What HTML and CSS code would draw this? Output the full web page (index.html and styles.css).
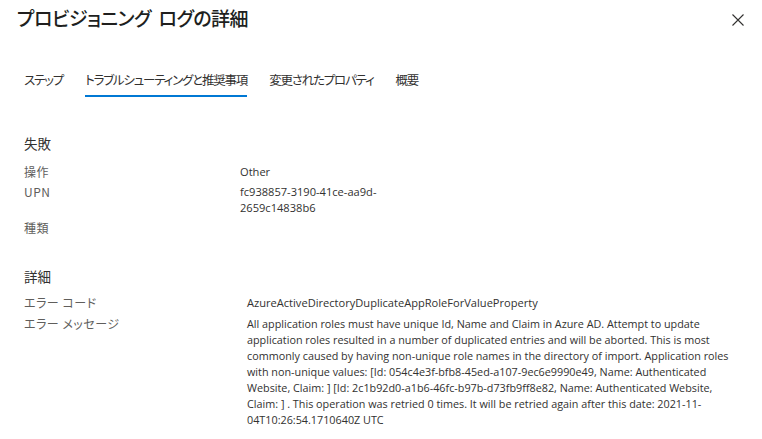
FILE: index.html
```html
<!DOCTYPE html>
<html lang="ja">
<head>
<meta charset="utf-8">
<title>プロビジョニング ログの詳細</title>
<link rel="stylesheet" href="styles.css">
</head>
<body>
<div class="panel">
  <header class="header">
    <h1 class="title">プロビジョニング ログの詳細</h1>
    <button class="close" aria-label="閉じる">
      <svg width="12" height="12" viewBox="0 0 12 12"><path d="M0.5 0.5 L11.5 11.5 M11.5 0.5 L0.5 11.5" stroke="#323130" stroke-width="1.1" fill="none"/></svg>
    </button>
  </header>
  <nav class="tabs">
    <span class="tab">ステップ</span>
    <span class="tab active">トラブルシューティングと推奨事項</span>
    <span class="tab">変更されたプロパティ</span>
    <span class="tab">概要</span>
  </nav>
  <section class="section first">
    <h2 class="section-title">失敗</h2>
    <div class="grid grid-a">
      <div class="label">操作</div><div class="value">Other</div>
      <div class="label">UPN</div><div class="value upn">fc938857-3190-41ce-aa9d-2659c14838b6</div>
      <div class="label">種類</div><div class="value"></div>
    </div>
  </section>
  <section class="section second">
    <h2 class="section-title">詳細</h2>
    <div class="grid grid-b">
      <div class="label">エラー コード</div><div class="value">AzureActiveDirectoryDuplicateAppRoleForValueProperty</div>
      <div class="label">エラー メッセージ</div><div class="value msg">All application roles must have unique Id, Name and Claim in Azure AD. Attempt to update<br>application roles resulted in a number of duplicated entries and will be aborted. This is most<br>commonly caused by having non-unique role names in the directory of import. Application roles<br>with non-unique values: [Id: 054c4e3f-bfb8-45ed-a107-9ec6e9990e49, Name: Authenticated<br>Website, Claim: ] [Id: 2c1b92d0-a1b6-46fc-b97b-d73fb9ff8e82, Name: Authenticated Website,<br>Claim: ] . This operation was retried 0 times. It will be retried again after this date: 2021-11-<br>04T10:26:54.1710640Z UTC</div>
    </div>
  </section>
</div>
</body>
</html>
```
FILE: styles.css
```css
html, body {
  margin: 0;
  padding: 0;
  background: #ffffff;
}
body {
  font-family: "Open Sans", "Noto Sans CJK JP", sans-serif;
  color: #323130;
  font-size: 11.1px;
}
.panel {
  width: 762px;
}
.header {
  display: flex;
  justify-content: space-between;
  align-items: flex-start;
  padding: 4px 18px 0 17px;
}
.title {
  margin: 0;
  font-family: "Noto Sans CJK JP", sans-serif;
  font-feature-settings: "palt";
  font-size: 19px;
  letter-spacing: -0.5px;
  word-spacing: 4px;
  line-height: 28px;
  font-weight: 500;
  color: #201f1e;
}
.close {
  border: 0;
  background: none;
  padding: 0;
  margin-top: 10px;
  width: 12px;
  height: 12px;
  display: flex;
}
.tabs {
  display: flex;
  gap: 22px;
  padding: 39px 24px 0;
}
.tab {
  font-family: "Noto Sans CJK JP", sans-serif;
  font-feature-settings: "palt";
  font-size: 12.5px;
  letter-spacing: -1.2px;
  line-height: 18px;
  padding-bottom: 6px;
  border-bottom: 2px solid transparent;
  color: #323130;
}
.tab.active {
  border-bottom-color: #0078d4;
}
.section {
  padding: 0 24px;
}
.section.first {
  margin-top: 36px;
}
.section.second {
  margin-top: 30px;
}
.section-title {
  margin: 0;
  font-family: "Noto Sans CJK JP", sans-serif;
  font-size: 13.5px;
  line-height: 20px;
  font-weight: 400;
  color: #323130;
}
.first .section-title {
  margin-bottom: 11px;
}
.second .section-title {
  margin-bottom: 9px;
}
.grid {
  display: grid;
  row-gap: 4px;
  line-height: 16px;
}
.grid-a {
  grid-template-columns: 216px 150px;
}
.grid-b {
  grid-template-columns: 223px 510px;
  row-gap: 5px;
}
.label {
  font-family: "Noto Sans CJK JP", sans-serif;
  font-feature-settings: "palt";
  font-size: 12px;
  letter-spacing: 0.5px;
  color: #605e5c;
}
.value {
  color: #323130;
  min-height: 16px;
}
.msg {
  font-size: 10.8px;
}
```
